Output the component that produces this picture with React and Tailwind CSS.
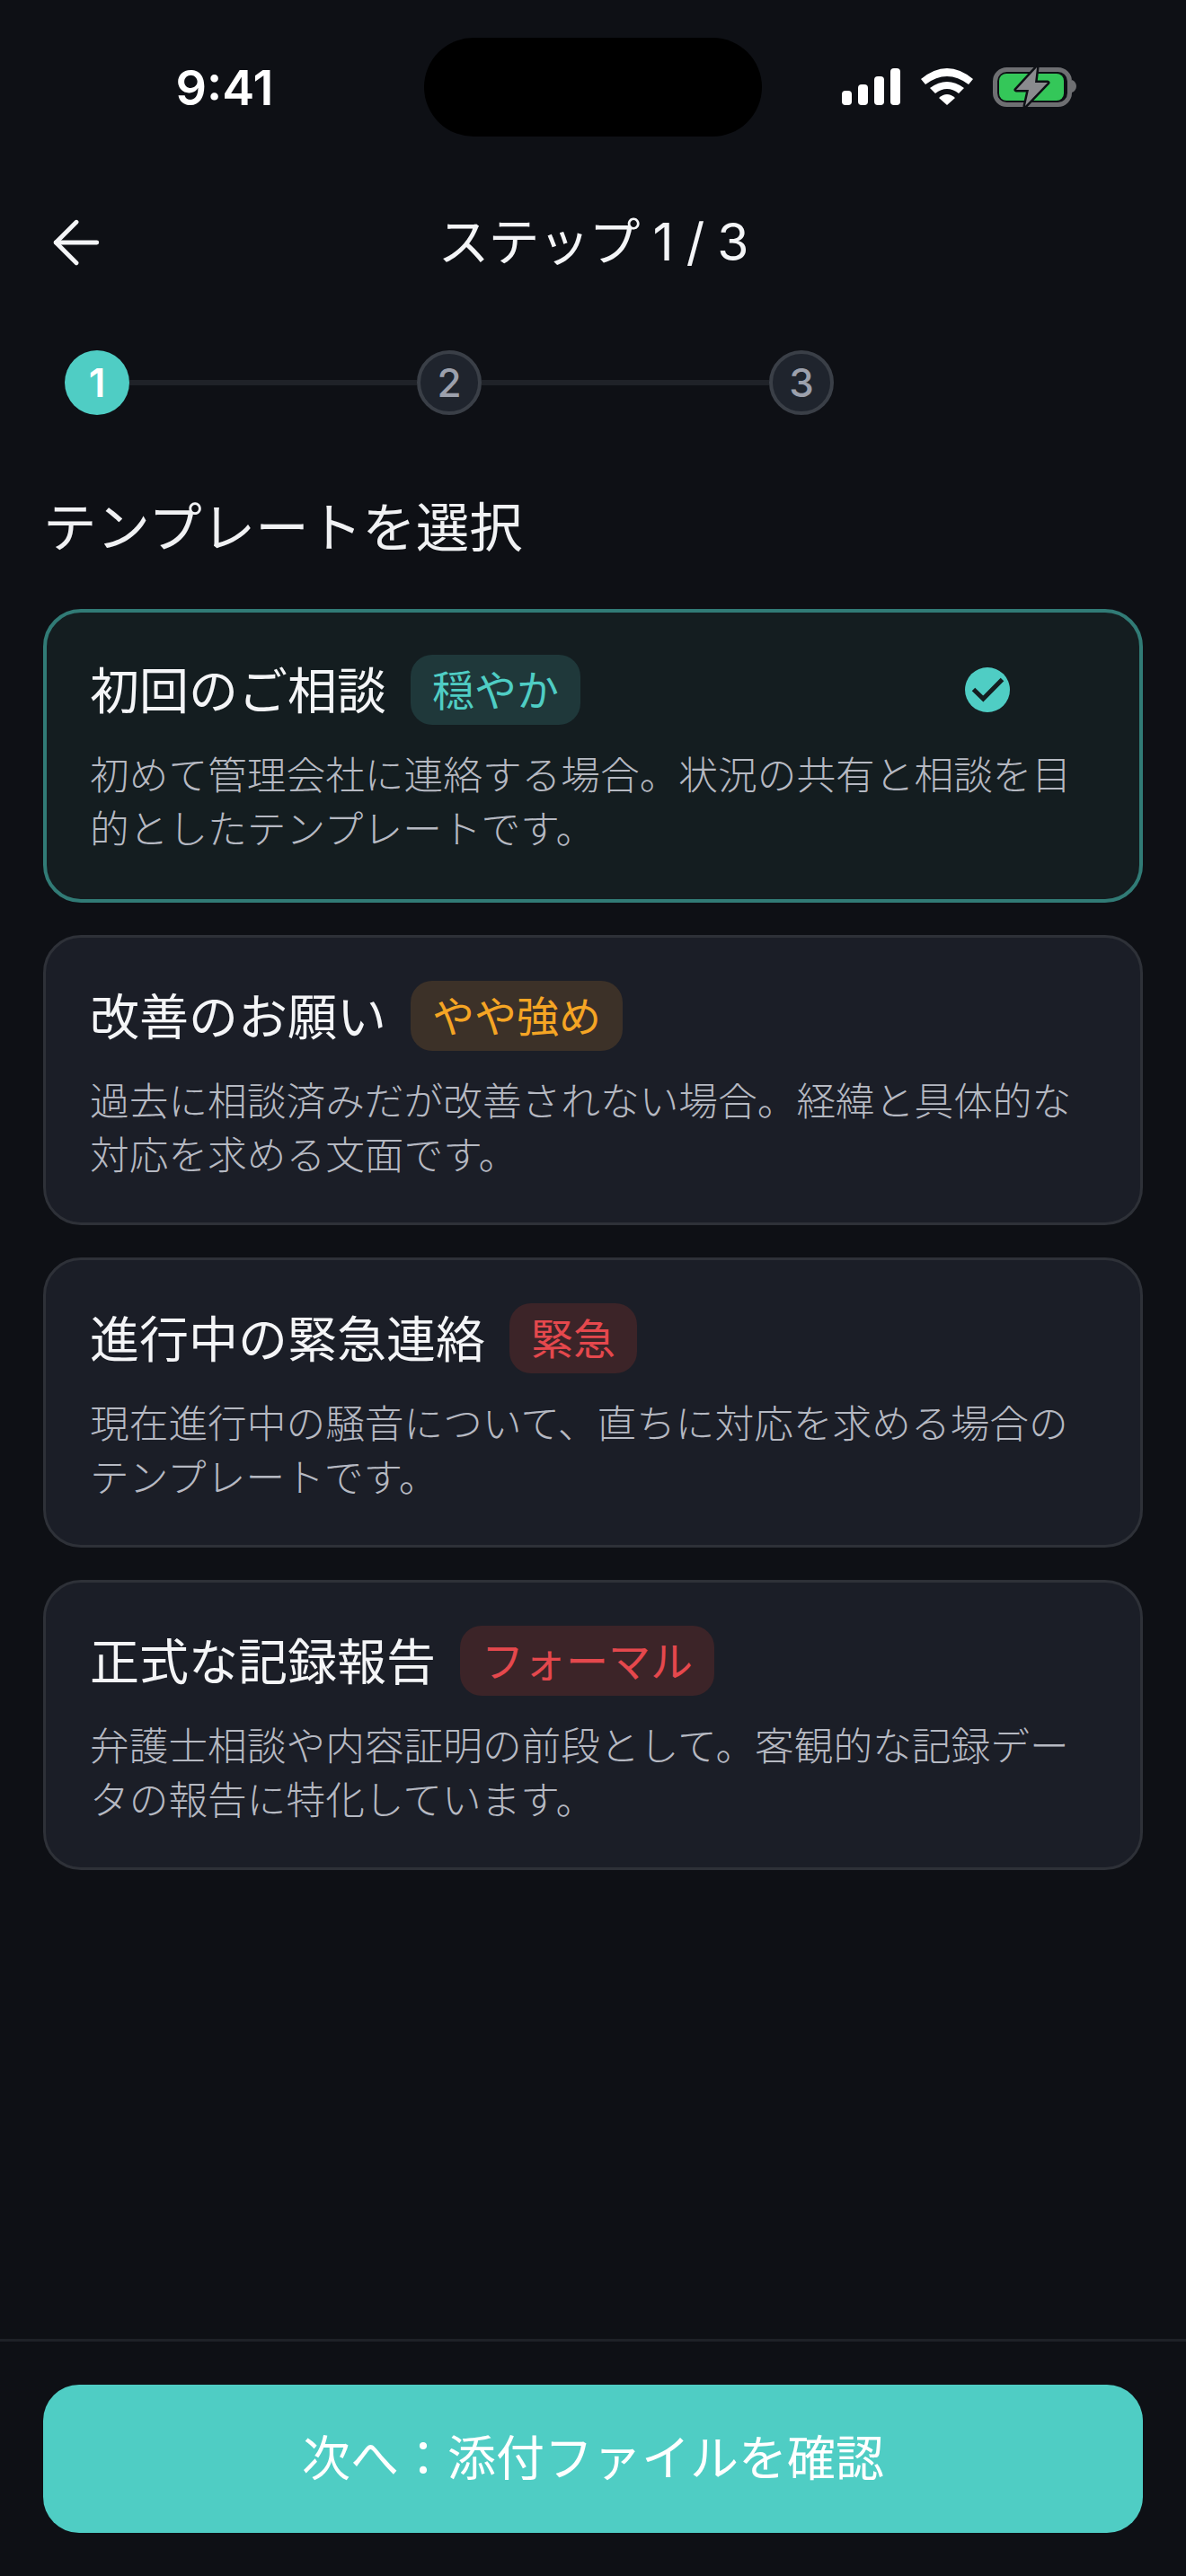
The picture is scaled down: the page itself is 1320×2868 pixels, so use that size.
import { ArrowLeft } from 'lucide-react';

const templates = [
  {
    title: '初回のご相談',
    badge: '穏やか',
    badgeClass: 'bg-[#1f383a] text-[#4fcdc4]',
    desc: '初めて管理会社に連絡する場合。状況の共有と相談を目\n的としたテンプレートです。',
    selected: true,
  },
  {
    title: '改善のお願い',
    badge: 'やや強め',
    badgeClass: 'bg-[#3c3128] text-[#f5a524]',
    desc: '過去に相談済みだが改善されない場合。経緯と具体的な\n対応を求める文面です。',
  },
  {
    title: '進行中の緊急連絡',
    badge: '緊急',
    badgeClass: 'bg-[#3c2428] text-[#e5484d]',
    desc: '現在進行中の騒音について、直ちに対応を求める場合の\nテンプレートです。',
  },
  {
    title: '正式な記録報告',
    badge: 'フォーマル',
    badgeClass: 'bg-[#3c2428] text-[#e5484d]',
    desc: '弁護士相談や内容証明の前段として。客観的な記録デー\nタの報告に特化しています。',
  },
];

function StatusIcons() {
  return (
    <svg width="262" height="46" viewBox="0 0 262 46">
      {/* signal */}
      <rect x="1" y="27" width="11" height="16" rx="4" fill="#fff" />
      <rect x="19" y="20" width="11" height="23" rx="4" fill="#fff" />
      <rect x="37" y="11" width="11" height="32" rx="4" fill="#fff" />
      <rect x="55" y="2" width="11" height="41" rx="4" fill="#fff" />
      {/* wifi */}
      <path d="M89 14Q118 -10 147 14L142 20Q118 2 94 20Z" fill="#fff" />
      <path d="M99 24Q118 10 137 24L131 30Q118 20 105 30Z" fill="#fff" />
      <path d="M109 35Q118 27 127 35L118 43Z" fill="#fff" />
      {/* battery */}
      <rect x="171.5" y="3.5" width="83" height="39" rx="13" fill="none" stroke="#6e6f72" strokeWidth="5" />
      <path d="M257 15C260 16 262 19 262 22C262 25 260 28 257 29Z" fill="#6e6f72" />
      <rect x="176" y="8" width="72" height="30" rx="8" fill="#34c759" />
      <path
        d="M218 1L195 26H209L205 44L230 18H216Z"
        fill="#8a8b8e"
        stroke="#0e1015"
        strokeWidth="5"
        strokeLinejoin="round"
        paintOrder="stroke"
      />
    </svg>
  );
}

function StepDot({ n, active }) {
  return (
    <div
      className={`w-[72px] h-[72px] shrink-0 rounded-full flex items-center justify-center text-[44px] ${
        active
          ? 'bg-[#4fcdc4] text-white font-semibold'
          : 'bg-[#1f242d] border-[4.5px] border-[#3a3f47] text-[#9ca0ac] font-medium'
      }`}
    >
      {n}
    </div>
  );
}

function TemplateCard({ t }) {
  return (
    <div
      className={`rounded-[42px] ${
        t.selected
          ? 'bg-[#141d20] border-[4.5px] border-[#317b76] pl-[48px] pr-[50px] pt-[47px] pb-[47px]'
          : 'bg-[#1b1e27] border-[3px] border-[#2e3138] pl-[49px] pr-[51px] pt-[48px] pb-[44px]'
      }`}
    >
      <div className="flex items-center">
        <span className="text-[55px] leading-[76px] pt-[2px] text-[#f4f5f7]">{t.title}</span>
        <span className={`ml-[27px] h-[78px] px-[24px] pt-[2px] rounded-[24px] flex items-center text-[47px] ${t.badgeClass}`}>
          {t.badge}
        </span>
        {t.selected && (
          <svg className="ml-auto mr-[94px]" width="50" height="50" viewBox="0 0 50 50">
            <circle cx="25" cy="25" r="25" fill="#4fcdc4" />
            <path d="M9.5 24.5L20.3 35L41.5 13.5" fill="none" stroke="#141d20" strokeWidth="5" />
          </svg>
        )}
      </div>
      <p className="mt-[27px] text-[43.7px] leading-[60px] font-light text-[#b6b9c2] whitespace-pre-line">{t.desc}</p>
    </div>
  );
}

export default function App() {
  return (
    <div className="w-[1320px] h-[2868px] bg-[#0e1015] flex flex-col font-['Inter','Noto_Sans_CJK_JP',sans-serif]">
      {/* status bar */}
      <div className="grid grid-cols-[472px_376px_472px] h-[180px] pt-[42px]">
        <div className="h-[110px] flex items-center justify-center pl-[28px] text-[54px] font-semibold text-white">
          9:41
        </div>
        <div className="h-[110px] rounded-full bg-black" />
        <div className="h-[110px] flex items-center pl-[88px]">
          <StatusIcons />
        </div>
      </div>

      {/* header */}
      <div className="mt-[30px] h-[120px] flex items-center px-[46px]">
        <ArrowLeft size={78} strokeWidth={1.5} className="text-[#f4f5f7] shrink-0" />
        <div className="flex-1 text-center text-[57px] tracking-[-1px] text-[#f4f5f7]">ステップ 1 / 3</div>
        <div className="w-[78px]" />
      </div>

      {/* stepper */}
      <div className="mt-[60px] ml-[72px] w-[856px] flex items-center">
        <StepDot n={1} active />
        <div className="flex-1 h-[6px] bg-[#1f2228]" />
        <StepDot n={2} />
        <div className="flex-1 h-[6px] bg-[#1f2228]" />
        <StepDot n={3} />
      </div>

      <h1 className="mt-[95px] px-[48px] text-[59.5px] leading-[60px] text-[#f0f1f3]">テンプレートを選択</h1>

      <div className="mt-[61px] px-[48px] flex flex-col gap-[36px]">
        {templates.map(t => (
          <TemplateCard key={t.title} t={t} />
        ))}
      </div>

      {/* footer */}
      <div className="mt-auto border-t-[3px] border-[#1e2127] px-[48px] pt-[48px] pb-[48px]">
        <button className="w-full h-[165px] rounded-[40px] bg-[#4fcdc4] text-white text-[54px]">
          次へ：添付ファイルを確認
        </button>
      </div>
    </div>
  );
}
